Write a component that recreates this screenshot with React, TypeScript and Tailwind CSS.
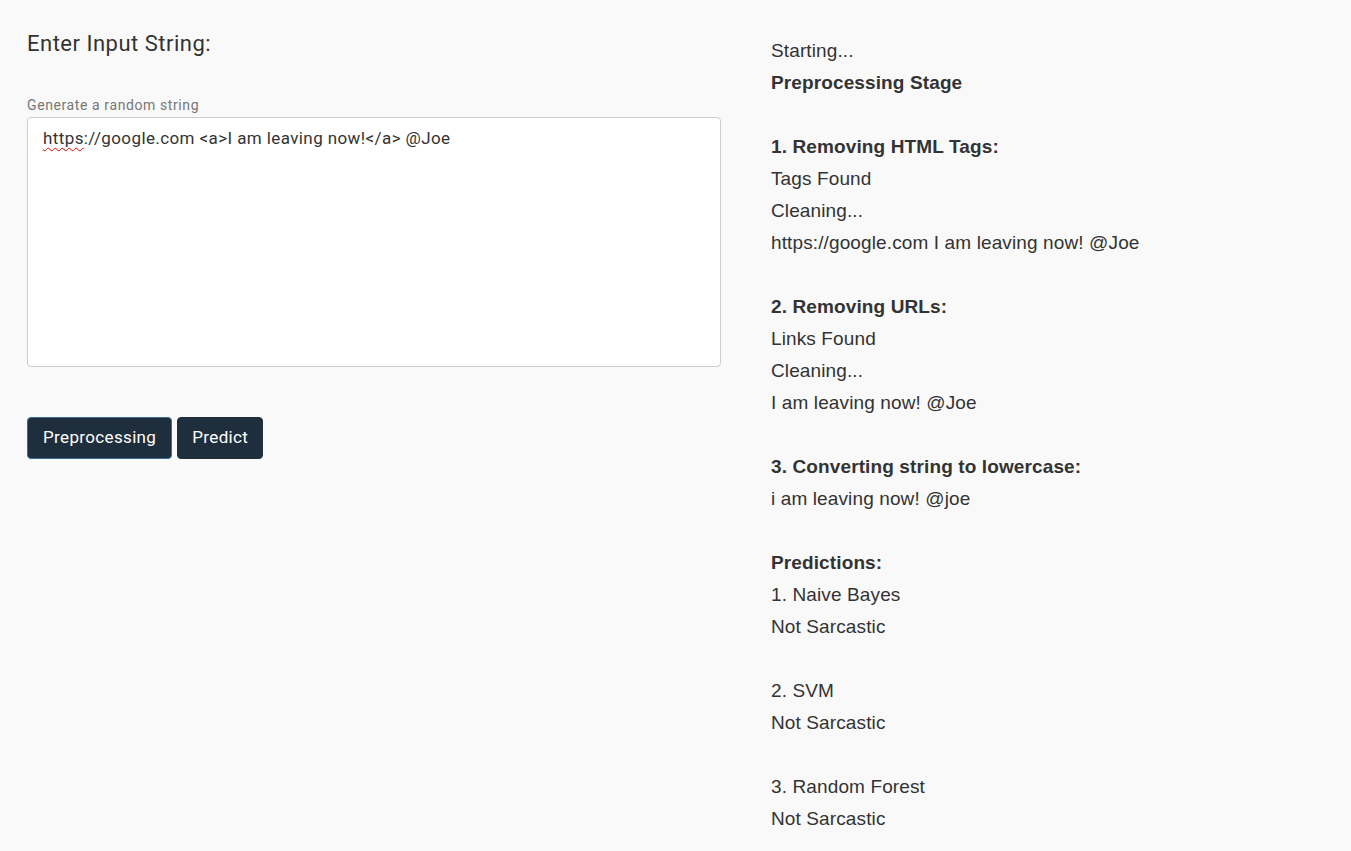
import React from "react";

const lines: { text: string; bold?: boolean }[] = [
  { text: "Starting..." },
  { text: "Preprocessing Stage", bold: true },
  { text: "" },
  { text: "1. Removing HTML Tags:", bold: true },
  { text: "Tags Found" },
  { text: "Cleaning..." },
  { text: "https://google.com I am leaving now! @Joe" },
  { text: "" },
  { text: "2. Removing URLs:", bold: true },
  { text: "Links Found" },
  { text: "Cleaning..." },
  { text: "I am leaving now! @Joe" },
  { text: "" },
  { text: "3. Converting string to lowercase:", bold: true },
  { text: "i am leaving now! @joe" },
  { text: "" },
  { text: "Predictions:", bold: true },
  { text: "1. Naive Bayes" },
  { text: "Not Sarcastic" },
  { text: "" },
  { text: "2. SVM" },
  { text: "Not Sarcastic" },
  { text: "" },
  { text: "3. Random Forest" },
  { text: "Not Sarcastic" },
];

export default function App() {
  return (
    <div className="min-h-[851px] bg-[#f9f9f9] text-[#333]">
      <div className="grid grid-cols-[694px_1fr] gap-[50px] pl-[27px]">
        <div className="pt-[30px] font-['Roboto',sans-serif]">
          <h2 className="text-[22px] leading-[28px] tracking-[0.5px] text-[#333]">Enter Input String:</h2>
          <label className="mt-[38px] block text-[14px] leading-[18px] tracking-[0.6px] text-[#777]">
            Generate a random string
          </label>
          <div className="mt-[3px] h-[250px] rounded-[4px] border border-[#ccc] bg-white px-[15px] py-[8px] text-[17px] leading-[24px] tracking-[0.4px] text-[#333]">
            <span className="underline decoration-wavy decoration-[#e00] decoration-1 underline-offset-[3px]">https</span>
            ://google.com &lt;a&gt;I am leaving now!&lt;/a&gt; @Joe
          </div>
          <div className="mt-[50px] flex gap-[5px]">
            <button className="h-[42px] rounded-[4px] border border-[#3b6c9a] bg-[#1f2e3d] px-[15px] text-[17px] tracking-[0.35px] text-white">
              Preprocessing
            </button>
            <button className="h-[42px] rounded-[4px] border border-[#1f2e3d] bg-[#1f2e3d] px-[14px] text-[17px] tracking-[0.35px] text-white">
              Predict
            </button>
          </div>
        </div>
        <div className="pt-[35px] font-['Liberation_Sans',Arial,sans-serif] text-[19px] leading-[32px] tracking-[0.12px]">
          {lines.map((l, i) => (
            <div key={i} className={l.bold ? "h-[32px] font-bold" : "h-[32px]"}>
              {l.text}
            </div>
          ))}
        </div>
      </div>
    </div>
  );
}
